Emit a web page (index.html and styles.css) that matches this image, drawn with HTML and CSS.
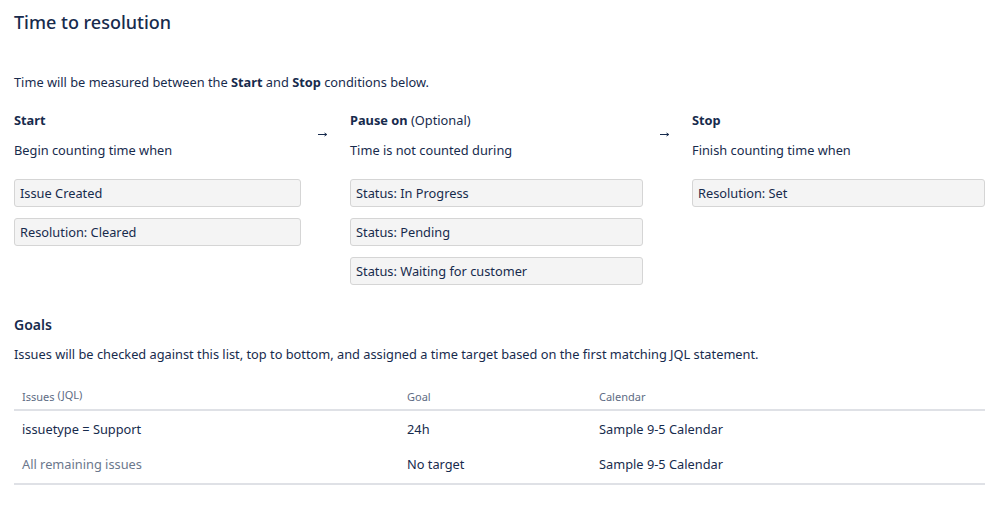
FILE: index.html
```html
<!DOCTYPE html>
<html>
<head>
<meta charset="utf-8">
<link rel="stylesheet" href="styles.css">
</head>
<body>
<div class="page">
  <h1 class="title">Time to resolution</h1>
  <p class="intro">Time will be measured between the <strong>Start</strong> and <strong>Stop</strong> conditions below.</p>
  <div class="conditions">
    <div class="col">
      <div class="col-head"><strong>Start</strong></div>
      <div class="col-sub">Begin counting time when</div>
      <div class="items">
        <div class="item">Issue Created</div>
        <div class="item">Resolution: Cleared</div>
      </div>
    </div>
    <div class="arrow"><svg width="10" height="5" viewBox="0 0 10 5"><path d="M0 2.5H8.5M6.5 1L8.8 2.5L6.5 4" fill="none" stroke="#172b4d" stroke-width="1"/></svg></div>
    <div class="col">
      <div class="col-head"><strong>Pause on</strong> (Optional)</div>
      <div class="col-sub">Time is not counted during</div>
      <div class="items">
        <div class="item">Status: In Progress</div>
        <div class="item">Status: Pending</div>
        <div class="item">Status: Waiting for customer</div>
      </div>
    </div>
    <div class="arrow"><svg width="10" height="5" viewBox="0 0 10 5"><path d="M0 2.5H8.5M6.5 1L8.8 2.5L6.5 4" fill="none" stroke="#172b4d" stroke-width="1"/></svg></div>
    <div class="col">
      <div class="col-head"><strong>Stop</strong></div>
      <div class="col-sub">Finish counting time when</div>
      <div class="items">
        <div class="item">Resolution: Set</div>
      </div>
    </div>
  </div>
  <h2 class="goals-title">Goals</h2>
  <p class="goals-desc">Issues will be checked against this list, top to bottom, and assigned a time target based on the first matching JQL statement.</p>
  <table class="goals">
    <thead>
      <tr>
        <th class="c-jql">Issues <span class="jql">(JQL)</span></th>
        <th class="c-goal">Goal</th>
        <th class="c-cal">Calendar</th>
      </tr>
    </thead>
    <tbody>
      <tr>
        <td>issuetype = Support</td>
        <td>24h</td>
        <td>Sample 9-5 Calendar</td>
      </tr>
      <tr>
        <td class="muted">All remaining issues</td>
        <td>No target</td>
        <td>Sample 9-5 Calendar</td>
      </tr>
    </tbody>
  </table>
</div>
</body>
</html>
```

FILE: styles.css
```css
* { box-sizing: border-box; }
html, body { margin: 0; padding: 0; background: #fff; }
body {
  font-family: "Noto Sans", "Open Sans", sans-serif;
  font-size: 12.8px;
  color: #172b4d;
}
.page { padding: 10px 14px 0 14px; }
.title {
  margin: 0;
  font-size: 18px;
  font-weight: 500;
  line-height: 24px;
}
.intro {
  margin: 38px 0 0 0;
  line-height: 20px;
}
strong { font-weight: 700; }
.conditions {
  display: grid;
  grid-template-columns: 287px 49px 293px 49px 293px;
  margin-top: 18px;
}
.col-head { line-height: 20px; }
.col-sub { line-height: 20px; margin-top: 10px; }
.items {
  display: flex;
  flex-direction: column;
  gap: 11px;
  margin-top: 19px;
}
.item {
  height: 28px;
  line-height: 26px;
  padding: 0 5px;
  background: #f4f4f4;
  border: 1px solid #d5d5d5;
  border-radius: 3px;
}
.arrow {
  display: flex;
  align-items: flex-start;
  padding-top: 22px;
  padding-left: 17px;
}
.arrow svg { display: block; }
.goals-title {
  margin: 30px 0 0 0;
  font-size: 14px;
  font-weight: 600;
  line-height: 20px;
}
.goals-desc {
  margin: 9px 0 0 0;
  line-height: 20px;
}
.goals {
  width: 100%;
  border-collapse: collapse;
  margin-top: 20px;
}
.goals th {
  text-align: left;
  font-weight: 400;
  font-size: 11px;
  color: #5e6c84;
  height: 26px;
  padding: 0 8px;
  vertical-align: middle;
  border-bottom: 2px solid #dfe1e6;
}
.jql { position: relative; top: -2px; }
.goals th.c-jql { width: 385px; }
.goals th.c-goal { width: 192px; }
.goals td {
  line-height: 20px;
  padding: 8px 8px 7px 8px;
  vertical-align: middle;
}
.goals tbody tr:last-child td {
  padding-bottom: 9px;
  border-bottom: 2px solid #dfe1e6;
}
.muted { color: #6b778c; }
```
